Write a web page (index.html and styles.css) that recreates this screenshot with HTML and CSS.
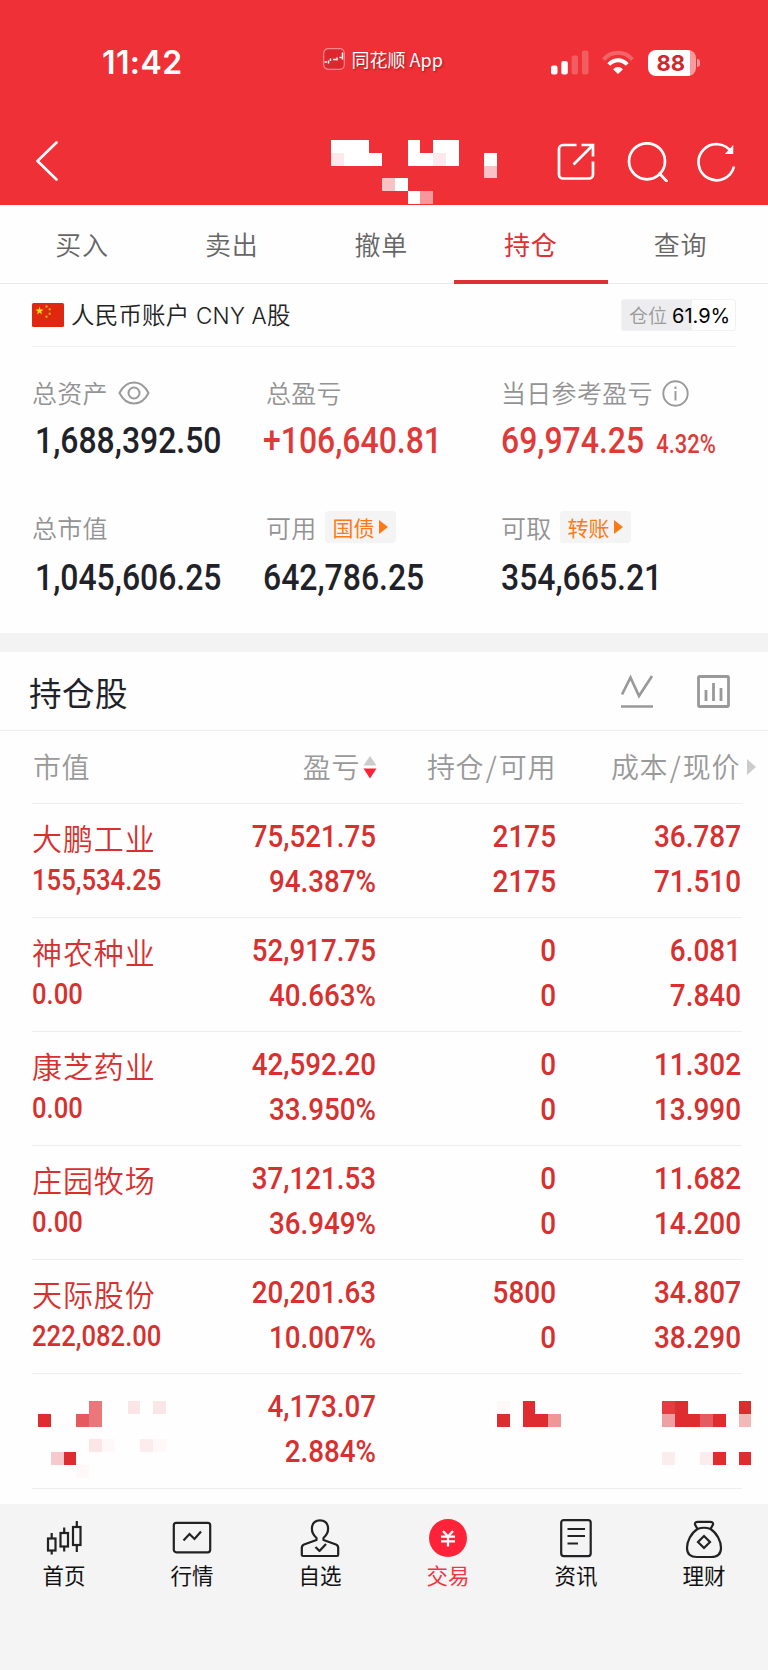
FILE: index.html
```html
<!DOCTYPE html>
<html lang="zh-CN">
<head>
<meta charset="utf-8">
<title>持仓</title>
<link rel="stylesheet" href="styles.css">
</head>
<body>
<header class="top">
  <div class="status">
    <span class="clock">11:42</span>
    <div class="appname">
      <svg width="22" height="22" viewBox="0 0 22 22"><rect x=".7" y=".7" width="20.6" height="20.6" rx="4.5" fill="#de262f" stroke="#f9888c" stroke-width="1.2"/><path d="M1.500 14h2.500M5.500 12.500v3M7.500 10.500v2.500M10 11.500h3M14 9.500v3M16.500 9.500h2M19.500 4.500v7" stroke="#fff" stroke-width="1.500" fill="none"/></svg>
      <span>同花顺 App</span>
    </div>
    <div class="signals">
      <svg width="38" height="25" viewBox="0 0 38 25" fill="#fff"><rect x="0" y="15.500" width="6.500" height="9" rx="2"/><rect x="10.300" y="11" width="6.500" height="13.500" rx="2"/><rect x="20.600" y="5.500" width="6.500" height="19" rx="2" opacity=".22"/><rect x="31" y="0.500" width="6.500" height="24" rx="2" opacity=".22"/></svg>
      <svg class="wifi" width="32" height="25" viewBox="0 0 32 25" fill="none" stroke="#fff" stroke-width="4"><path d="M1.600 9.500C9.500.500 22.500.500 30.400 9.500" opacity=".25"/><path d="M6.800 14.500C12 8.800 20 8.800 25.200 14.500"/><path d="M11 19.200Q16 14.600 21 19.200L16 24Z" fill="#fff" stroke="none"/></svg>
      <div class="battery"><span>88</span></div>
      <i class="battery-tip"></i>
    </div>
  </div>
  <div class="navbar">
    <svg class="back" width="24" height="42" viewBox="0 0 24 42" fill="none" stroke="#fff" stroke-width="2.600" stroke-linecap="round" stroke-linejoin="round"><path d="M20.500 2.500 1.500 21l19 18.500"/></svg>
    <svg class="title-mosaic" width="166" height="64" viewBox="0 0 13 5" preserveAspectRatio="none" shape-rendering="crispEdges" fill="#fff"><path d="M0 0h3v1h1v1H0zM6 0h1v1h1V0h2v2H6zM12 1h1v1h-1zM5 3h1v1H5zM6 4h1v1H6z"/><path fill="#fde8ea" d="M0 1h1v1H0zM8 1h1v1H8z"/><path fill="#f9c2c6" d="M12 2h1v1h-1zM4 3h1v1H4z"/><path fill="#f6979b" d="M7 4h1v1H7z"/></svg>
    <div class="actions">
      <svg width="38" height="38" viewBox="0 0 38 38" fill="none" stroke="#fff" stroke-width="2.700"><path d="M19.500 2H6a4 4 0 0 0-4 4V31.500a4 4 0 0 0 4 4h26a4 4 0 0 0 4-4V18.500M24.500 2H36V13.500M36 2 16.500 21.500"/></svg>
      <svg width="41" height="40" viewBox="0 0 41 40" fill="none" stroke="#fff" stroke-width="2.700"><circle cx="20" cy="19.300" r="18"/><path d="m32.500 31.500 7 7.500" stroke-linecap="round"/></svg>
      <svg width="39" height="40" viewBox="0 0 39 40" fill="none" stroke="#fff" stroke-width="2.700"><path d="M34.700 10.500A18 18 0 1 0 37 24.500"/><path d="M29.500 11.300h6V4.800z" fill="#fff" stroke-width="1.500"/></svg>
    </div>
  </div>
</header>

<nav class="tabs">
  <a>买入</a><a>卖出</a><a>撤单</a><a class="on">持仓</a><a>查询</a>
</nav>

<section class="account">
  <svg width="32" height="24" viewBox="0 0 32 24"><rect width="32" height="24" rx="1.500" fill="#de2910"/><path fill="#ffde00" d="m7.500 3.600 1 3h3.100L9.100 8.400l1 3-2.600-1.900-2.600 1.900 1-3-2.500-1.800h3.100z"/><g fill="#e8a013"><circle cx="14.500" cy="3.500" r="1.200"/><circle cx="17.700" cy="6.300" r="1.200"/><circle cx="17.700" cy="10.700" r="1.200"/><circle cx="14.500" cy="13.800" r="1.200"/></g></svg>
  <span class="acct-name">人民币账户<b> CNY A</b>股</span>
  <span class="position"><em>仓位</em>61.9%</span>
</section>

<section class="assets">
  <div class="asset">
    <div class="label">总资产<svg class="eye" width="32" height="24" viewBox="0 0 32 24" fill="none" stroke="#9a9a9a" stroke-width="2"><path d="M1.500 12C8.500-2 23.500-2 30.500 12 23.500 26 8.500 26 1.500 12z"/><circle cx="16" cy="12" r="5.500"/></svg></div>
    <div class="num"><span class="inset">1,688,392.50</span></div>
  </div>
  <div class="asset">
    <div class="label">总盈亏</div>
    <div class="num red"><span>+106,640.81</span></div>
  </div>
  <div class="asset">
    <div class="label">当日参考盈亏<svg class="info" width="27" height="27" viewBox="0 0 27 27" fill="none" stroke="#9a9a9a" stroke-width="1.900"><circle cx="13.500" cy="13.500" r="12.200"/><path d="M13.500 11v9.500M13.500 6.500v2.600"/></svg></div>
    <div class="num red"><span>69,974.25<small>4.32%</small></span></div>
  </div>
  <div class="asset">
    <div class="label">总市值</div>
    <div class="num"><span class="inset">1,045,606.25</span></div>
  </div>
  <div class="asset">
    <div class="label">可用<span class="chip">国债<i></i></span></div>
    <div class="num"><span>642,786.25</span></div>
  </div>
  <div class="asset">
    <div class="label">可取<span class="chip">转账<i></i></span></div>
    <div class="num"><span>354,665.21</span></div>
  </div>
</section>

<section class="holdings">
  <div class="hold-head">
    <h2>持仓股</h2>
    <svg width="34" height="34" viewBox="0 0 34 34" fill="none" stroke="#999" stroke-width="2.700"><path d="M2 20.500 10.500 3.500 19 22 32 2M1 32.500h32"/></svg>
    <svg width="34" height="34" viewBox="0 0 34 34" fill="none" stroke="#999" stroke-width="2.800"><rect x="2.500" y="2.500" width="30" height="30" rx="1"/><path d="M10 16v11M17.500 9v18M25 14v13"/></svg>
  </div>
  <div class="row cols">
    <div>市值</div>
    <div>盈亏<svg class="sort" width="14" height="24" viewBox="0 0 14 24"><path d="M7 1l6.500 9.500H.5z" fill="#ccc"/><path d="M7 23.500.5 13.500h13z" fill="#fc2238"/></svg></div>
    <div>持仓<s>/</s>可用</div>
    <div>成本<s>/</s>现价<i class="more"></i></div>
  </div>
  <div class="row item"><div><p>大鹏工业</p><p class="val">155,534.25</p></div><div><p>75,521.75</p><p>94.387%</p></div><div><p>2175</p><p>2175</p></div><div><p>36.787</p><p>71.510</p></div></div>
  <div class="row item"><div><p>神农种业</p><p class="val">0.00</p></div><div><p>52,917.75</p><p>40.663%</p></div><div><p>0</p><p>0</p></div><div><p>6.081</p><p>7.840</p></div></div>
  <div class="row item"><div><p>康芝药业</p><p class="val">0.00</p></div><div><p>42,592.20</p><p>33.950%</p></div><div><p>0</p><p>0</p></div><div><p>11.302</p><p>13.990</p></div></div>
  <div class="row item"><div><p>庄园牧场</p><p class="val">0.00</p></div><div><p>37,121.53</p><p>36.949%</p></div><div><p>0</p><p>0</p></div><div><p>11.682</p><p>14.200</p></div></div>
  <div class="row item"><div><p>天际股份</p><p class="val">222,082.00</p></div><div><p>20,201.63</p><p>10.007%</p></div><div><p>5800</p><p>0</p></div><div><p>34.807</p><p>38.290</p></div></div>
  <div class="row item masked">
    <div><svg width="128" height="76.600" viewBox="0 0 10 6" shape-rendering="crispEdges"><path fill="#df2c2f" d="M0 1h1v1H0zM2 4h1v1H2z"/><path fill="#e55a5d" d="M3 1h1v1H3z"/><path fill="#ea777a" d="M4 0h1v2H4z"/><path fill="#f6c9cc" d="M1 4h1v1H1z"/><path fill="#fbe6e7" d="M4 3h1v1H4zM7 0h1v1H7zM9 0h1v1H9z"/><path fill="#fceced" d="M8 3h1v1H8z"/><path fill="#fef8f9" d="M5 3h1v1H5zM9 3h1v1H9zM3 5h1v1H3z"/></svg></div>
    <div><p>4,173.07</p><p>2.884%</p></div>
    <div><svg width="64" height="76.600" viewBox="0 0 5 6" shape-rendering="crispEdges"><path fill="#df2c2f" d="M0 1h1v1H0zM2 0h1v1h1v1H2z"/><path fill="#ef9697" d="M4 1h1v1H4z"/><path fill="#fef8f8" d="M0 0h1v1H0z"/></svg></div>
    <div><svg width="89.500" height="76.600" viewBox="0 0 7 6" shape-rendering="crispEdges"><path fill="#df2c2f" d="M1 0h1v1h1v1H1zM4 1h1v1H4zM6 0h1v1H6zM4 4h1v1H4zM6 4h1v1H6z"/><path fill="#e23d40" d="M0 0h1v1H0z"/><path fill="#e65b5f" d="M3 1h1v1H3z"/><path fill="#f0a0a3" d="M0 1h1v1H0z"/><path fill="#f4b8b9" d="M6 1h1v1H6z"/><path fill="#fbedee" d="M0 4h1v1H0zM3 4h1v1H3z"/></svg></div>
  </div>
</section>

<footer class="dock">
  <a><svg width="40" height="40" viewBox="0 0 40 40" fill="none" stroke="#222" stroke-width="2.200"><rect x="4" y="19.500" width="7.500" height="12"/><path d="M7.700 14v5.500M7.700 31.500v4"/><rect x="16.500" y="14" width="7.500" height="13.500"/><path d="M20.200 8.500V14M20.200 27.500v5"/><rect x="29" y="8" width="7.500" height="18"/><path d="M32.800 2v6M32.800 26v7"/></svg>首页</a>
  <a><svg width="40" height="40" viewBox="0 0 40 40" fill="none" stroke="#222" stroke-width="2.200"><rect x="1.800" y="3.800" width="36.400" height="29.500" rx="2.500"/><path d="m11.500 21.500 6-6.500 5 5 6.500-7.500"/></svg>行情</a>
  <a><svg width="40" height="40" viewBox="0 0 40 40" fill="none" stroke="#222" stroke-width="2.200" stroke-linejoin="round"><path d="M16.500 19C9.500 13 10.500 1.300 20 1.300S30.500 13 23.500 19V21L36 25.500Q38.200 26.500 38.200 29V35.500Q38.200 37 37 37H3Q1.800 37 1.800 35.500V29Q1.800 26.500 4 25.500L16.500 21Z"/><path d="m15.500 28 4 4 6.500-7"/></svg>自选</a>
  <a class="on"><svg width="40" height="40" viewBox="0 0 40 40"><circle cx="20" cy="19" r="19" fill="#ff2339"/><path d="m15 12 5 5.500 5-5.500M13 17.600h14M13 22.300h14M20 17.500V27.500" fill="none" stroke="#fff" stroke-width="2.300"/></svg>交易</a>
  <a><svg width="40" height="40" viewBox="0 0 40 40" fill="none" stroke="#222" stroke-width="2.200"><rect x="5.200" y="1.100" width="29.500" height="36" rx="2.500"/><path d="M11.500 10h17.500M11.500 17h17.500M11.500 24.500H22"/></svg>资讯</a>
  <a><svg width="40" height="40" viewBox="0 0 40 40" fill="none" stroke="#222" stroke-width="2.200"><path d="M13.500 10 11 5.500Q10.500 2.800 14 2.800H26Q29.500 2.800 29 5.500L26.500 10"/><path d="M13.500 10Q20 7.500 26.500 10C33 14 37 22.500 37 29Q37 38 27 38H13Q3 38 3 29C3 22.500 7 14 13.500 10Z"/><path d="m20 17 6 6-6 6-6-6z"/></svg>理财</a>
</footer>
</body>
</html>
```
FILE: styles.css
```css
* { box-sizing: border-box; }
body {
  margin: 0;
  width: 768px;
  height: 1670px;
  background: #fefefe;
  font-family: "Noto Sans CJK SC", sans-serif;
  display: flex;
  flex-direction: column;
  overflow: hidden;
}
svg { display: block; flex: none; }
p, h2 { margin: 0; }

.top { height: 205px; background: #ef3036; color: #fff; flex: none; }
.status { height: 125px; padding-left: 102px; display: flex; align-items: center; }
.clock { width: 220.500px; font: 600 32px/40px Inter, sans-serif; letter-spacing: .4px; }
.appname { width: 228px; display: flex; align-items: center; gap: 7px; padding-bottom: 7px; font-size: 18px; line-height: 26px; text-shadow: 1px 1px 2px rgba(80, 0, 0, .5); white-space: nowrap; }
.signals { display: flex; align-items: center; }
.wifi { margin-left: 13px; }
.battery { margin-left: 14px; width: 48px; height: 26px; border-radius: 8px; background: linear-gradient(90deg, #fff 42px, #f99a9d 42px); color: #d3262c; font: 700 22px/27px Inter, sans-serif; padding-left: 9px; }
.battery-tip { width: 3px; height: 8px; margin-left: 1px; border-radius: 0 4px 4px 0; background: #f99a9d; }
.navbar { height: 80px; padding-left: 36px; display: flex; align-items: flex-start; }
.back { margin-top: 15px; }
.title-mosaic { margin: 15px 0 0 271px; }
.actions { display: flex; gap: 32px; margin: 17px 0 0 60px; }
.actions svg:nth-child(1) { margin-top: 1px; }
.actions svg:nth-child(3) { margin-left: -3px; }

.tabs { height: 79px; flex: none; padding: 0 12.700px 0 7.300px; display: flex; border-bottom: 1px solid #e9e9eb; font-size: 26px; letter-spacing: .8px; line-height: 78px; color: #666; font-weight: 350; }
.tabs a { width: 149.600px; text-align: center; height: 79px; }
.tabs .on { width: 153.600px; color: #df3033; font-weight: 400; border-bottom: 4px solid #df3033; margin: 0 -2px; }

.account { height: 63px; flex: none; margin: 0 32px; border-bottom: 1px solid #f1f1f1; display: flex; align-items: center; color: #222; }
.acct-name { margin-left: 7px; flex: 1; font-size: 23.500px; font-weight: 350; line-height: 34px; letter-spacing: .2px; white-space: pre; }
.acct-name b { font-family: Inter, sans-serif; font-weight: 350; font-size: 22.500px; }
.position { width: 115px; height: 32px; border: 1px solid #f1f1f3; border-radius: 3px; background: linear-gradient(90deg, #ededf0 70px, #fff 70px); font: 400 20px/32px Inter, sans-serif; color: #000; padding-left: 7px; white-space: nowrap; }
.position em { font: 350 19px/30px "Noto Sans CJK SC", sans-serif; color: #999; margin-right: 5px; }

.assets { height: 286px; flex: none; padding: 26px 0 0 32px; display: grid; grid-template-columns: 234px 235px 1fr; grid-template-rows: 135px 135px; }
.label { height: 40px; display: flex; align-items: center; font-size: 25px; font-weight: 350; color: #939393; letter-spacing: .3px; padding-bottom: 3px; }
.eye { margin: 3px 0 0 10px; }
.info { margin: 3px 0 0 9px; }
.num { height: 54px; line-height: 55px; font-family: Roboto, sans-serif; font-weight: 500; font-size: 36.500px; color: #1f2329; white-space: nowrap; }
.num span { display: inline-block; transform: scaleX(.875); transform-origin: 0 50%; }
.num .inset { margin-left: 3px; }
.asset:nth-child(3n+2) .num span { margin-left: -3px; }
.num small { font-size: 25px; margin-left: 14px; }
.asset:nth-child(n+4) .num { height: 58px; line-height: 59px; }
.red { color: #df3a38; }
.chip { margin: 1px 0 0 8px; width: 71px; height: 32px; border-radius: 4px; background: #f4f4f4; color: #ff7a14; font-size: 21px; font-weight: 400; line-height: 30px; letter-spacing: 0; padding-left: 8px; display: flex; align-items: center; gap: 4px; }
.chip i, .more { width: 0; height: 0; border-style: solid; border-color: transparent transparent transparent #ff7a14; border-width: 7px 0 7px 9px; }

.holdings { border-top: 19px solid #f3f3f3; height: 871px; flex: none; }
.hold-head { height: 79px; border-bottom: 1px solid #eee; padding: 0 38px 0 29px; display: flex; align-items: center; gap: 42px; }
.hold-head h2 { flex: 1; font-size: 32.500px; font-weight: 400; color: #1f2329; letter-spacing: .5px; }
.row { margin: 0 26px 0 32px; height: 114.100px; border-bottom: 1px solid #eee; display: grid; grid-template-columns: 160px 184px 180px 186px; }
.row > div:nth-child(n+2) { text-align: right; }
.cols { height: 73px; color: #999; font-size: 28px; font-weight: 350; line-height: 71px; letter-spacing: .6px; }
.cols > div { display: flex; align-items: center; white-space: nowrap; padding-left: 1px; height: 71px; }
.cols > div:nth-child(n+2) { justify-content: flex-end; }
.cols > div:nth-child(4) { margin-right: -14px; }
.cols s { text-decoration: none; padding: 0 1.500px; }
.sort { margin-left: 3px; margin-right: -1px; }
.more { border-color: transparent transparent transparent #ccc; border-width: 8px 0 8px 9px; margin-left: 7px; }

.item { color: #d8302f; font: 500 31px/45px Roboto, sans-serif; padding-top: 9.500px; }
.item p { white-space: nowrap; transform: scaleX(.895); transform-origin: 100% 50%; }
.item > div:nth-child(n+3) p { transform: scaleX(.9); }
.item > div:nth-child(4) { padding-right: 1px; }
.item > div:first-child p { transform: none; font: 350 30px/46px "Noto Sans CJK SC", sans-serif; letter-spacing: .9px; }
.item > div:first-child .val { font: 500 28.800px/40px Roboto, sans-serif; letter-spacing: 0; transform: scaleX(.89); transform-origin: 0 50%; }
.masked svg { margin-top: 17.500px; margin-left: 6px; }
.masked > div:nth-child(3) svg { margin-left: 121px; }
.masked > div:nth-child(4) svg { margin-left: 106px; }

.dock { flex: 1; background: #f4f4f4; padding-top: 15px; display: flex; color: #111; font-size: 21.500px; line-height: 32px; }
.dock a { width: 128px; display: flex; flex-direction: column; align-items: center; }
.dock .on { color: #f5333f; }
```
